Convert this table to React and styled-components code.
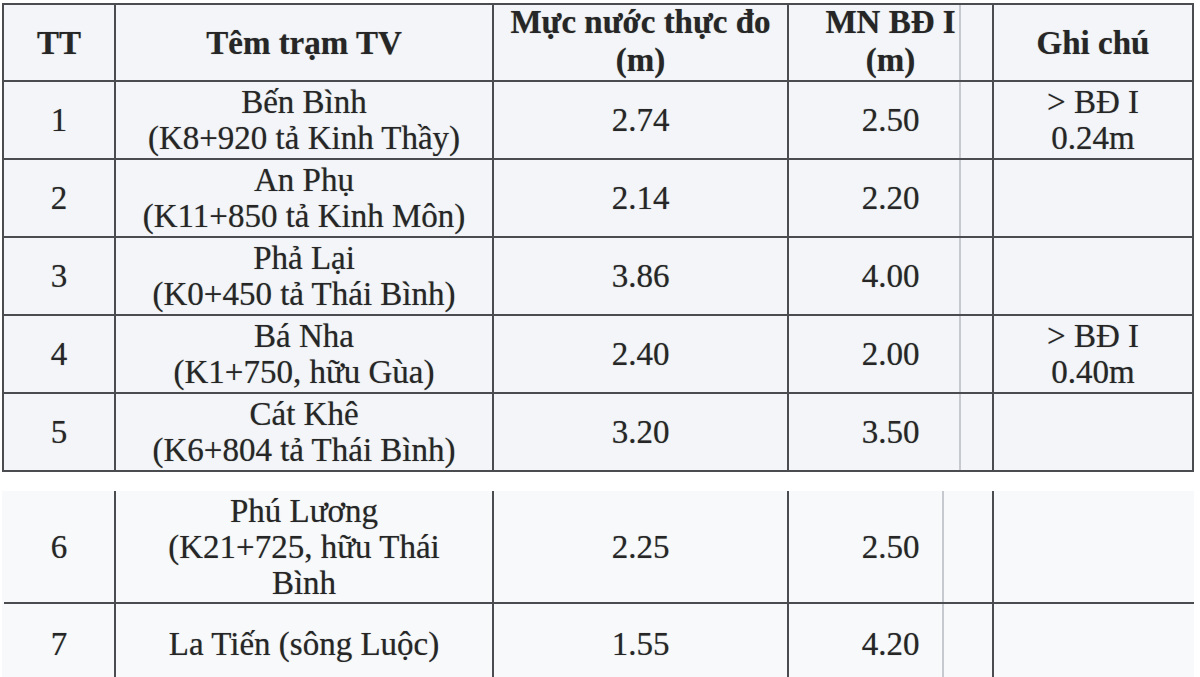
import React from 'react';
import styled, { createGlobalStyle } from 'styled-components';

const GlobalStyle = createGlobalStyle`
  html, body {
    margin: 0;
    padding: 0;
    background: #ffffff;
  }
  body {
    font-family: "Liberation Serif", "Times New Roman", serif;
    color: #262626;
  }
`;

const COLS = '112px 378px 295px 205px 200px';
const LINE = '#4b4c50';
const FAINT = '#c6c9cf';

const Page = styled.div`
  width: 1200px;
  height: 677px;
  overflow: hidden;
  padding: 3px 0 0 2px;
  box-sizing: border-box;
  background: #ffffff;
`;

const Sheet = styled.div`
  display: grid;
  grid-template-columns: ${COLS};
  grid-template-rows: ${(p) => p.$rows};
  width: max-content;
  background: ${(p) => p.$bg};
  border-left: ${(p) => (p.$open ? '0' : `2px solid ${LINE}`)};
  border-top: ${(p) => (p.$open ? '0' : `2px solid ${LINE}`)};
  padding-left: ${(p) => (p.$open ? '2px' : '0')};
  margin-top: ${(p) => (p.$open ? '19px' : '0')};
`;

const Cell = styled.div`
  box-sizing: border-box;
  display: flex;
  flex-direction: column;
  align-items: center;
  justify-content: center;
  text-align: center;
  font-family: "Liberation Serif", "Times New Roman", serif;
  font-size: 33px;
  line-height: ${(p) => (p.$head ? '38px' : '36px')};
  font-weight: ${(p) => (p.$head ? 700 : 400)};
  text-shadow: 0 0 1px rgba(30, 30, 30, 0.45);
  border-right: ${(p) => (p.$last ? '0' : `2px solid ${LINE}`)};
  border-bottom: ${(p) => (p.$flat ? '0' : `2px solid ${LINE}`)};
  padding-bottom: ${(p) => (p.$lift ? `${p.$lift}px` : '0')};
  background-image: ${(p) =>
    p.$split
      ? `linear-gradient(to right, transparent ${p.$split}px, ${FAINT} ${p.$split}px, ${FAINT} ${p.$split + 2}px, transparent ${p.$split + 2}px)`
      : 'none'};
  white-space: nowrap;
`;

const Line = styled.span`
  display: block;
`;

const topRows = [
  { tt: '1', name: ['Bến Bình', '(K8+920 tả Kinh Thầy)'], level: '2.74', alarm: '2.50', note: ['> BĐ I', '0.24m'] },
  { tt: '2', name: ['An Phụ', '(K11+850 tả Kinh Môn)'], level: '2.14', alarm: '2.20', note: [] },
  { tt: '3', name: ['Phả Lại', '(K0+450 tả Thái Bình)'], level: '3.86', alarm: '4.00', note: [] },
  { tt: '4', name: ['Bá Nha', '(K1+750, hữu Gùa)'], level: '2.40', alarm: '2.00', note: ['> BĐ I', '0.40m'] },
  { tt: '5', name: ['Cát Khê', '(K6+804 tả Thái Bình)'], level: '3.20', alarm: '3.50', note: [] },
];

const bottomRows = [
  { tt: '6', name: ['Phú Lương', '(K21+725, hữu Thái', 'Bình'], level: '2.25', alarm: '2.50', note: [] },
  { tt: '7', name: ['La Tiến (sông Luộc)'], level: '1.55', alarm: '4.20', note: [] },
];

function Lines({ items }) {
  return items.map((t) => <Line key={t}>{t}</Line>);
}

function DataRow({ row, split, open, flat }) {
  return (
    <>
      <Cell $flat={flat}>{row.tt}</Cell>
      <Cell $flat={flat}>
        <Lines items={row.name} />
      </Cell>
      <Cell $flat={flat}>{row.level}</Cell>
      <Cell $flat={flat} $split={split}>
        {row.alarm}
      </Cell>
      <Cell $flat={flat} $last={open}>
        <Lines items={row.note} />
      </Cell>
    </>
  );
}

export default function App() {
  return (
    <>
      <GlobalStyle />
      <Page>
        <Sheet $rows="77px repeat(5, 78px)" $bg="#f3f5f8">
          <Cell $head>TT</Cell>
          <Cell $head>Têm trạm TV</Cell>
          <Cell $head $lift={4}>
            <Line>Mực nước thực đo</Line>
            <Line>(m)</Line>
          </Cell>
          <Cell $head $split={170} $lift={4}>
            <Line>MN BĐ I</Line>
            <Line>(m)</Line>
          </Cell>
          <Cell $head>Ghi chú</Cell>
          {topRows.map((r) => (
            <DataRow key={r.tt} row={r} split={170} />
          ))}
        </Sheet>

        <Sheet $open $rows="113px 80px" $bg="#f8f9fb">
          {bottomRows.map((r, i) => (
            <DataRow key={r.tt} row={r} split={153} open flat={i === bottomRows.length - 1} />
          ))}
        </Sheet>
      </Page>
    </>
  );
}
